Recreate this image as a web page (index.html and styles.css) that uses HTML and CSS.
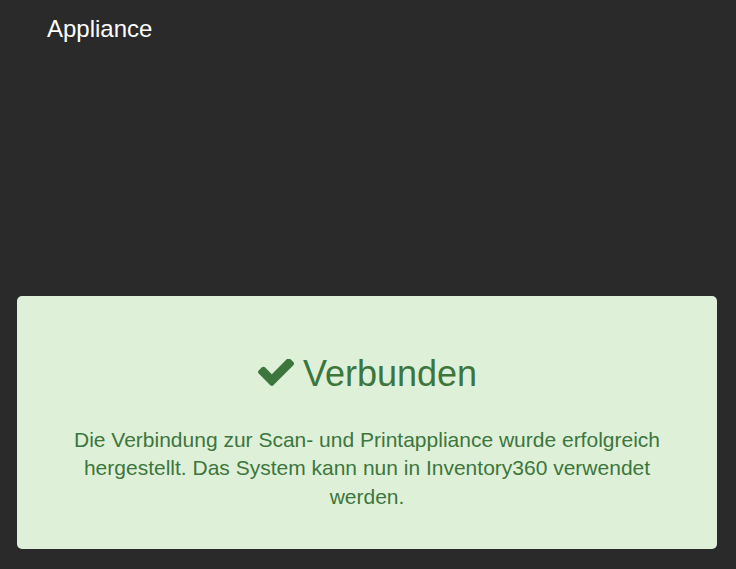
FILE: index.html
```html
<!DOCTYPE html>
<html lang="de">
<head>
<meta charset="utf-8">
<title>Appliance</title>
<link rel="stylesheet" href="styles.css">
</head>
<body>
<header class="topbar">
  <span class="brand">Appliance</span>
</header>
<main class="content">
  <section class="alert-success">
    <h1 class="status">
      <svg class="check" viewBox="120 370 1551 1156" aria-hidden="true"><path d="M1671 566q0 40-28 68l-724 724-136 136q-28 28-68 28t-68-28l-136-136-362-362q-28-28-28-68t28-68l136-136q28-28 68-28t68 28l294 295 656-657q28-28 68-28t68 28l136 136q28 28 28 68z" fill="currentColor"/></svg>
      <span>Verbunden</span>
    </h1>
    <p class="message">Die Verbindung zur Scan- und Printappliance wurde erfolgreich hergestellt. Das System kann nun in Inventory360 verwendet werden.</p>
  </section>
</main>
</body>
</html>
```

FILE: styles.css
```css
html, body {
  margin: 0;
  padding: 0;
  background: #2a2a2a;
  height: 100%;
}
body {
  font-family: "Liberation Sans", Arial, sans-serif;
}
.topbar {
  padding: 15px 47px 0;
  height: 296px;
  box-sizing: border-box;
}
.brand {
  color: #ffffff;
  font-size: 24px;
  line-height: 28px;
  display: block;
}
.content {
  padding: 0 17px;
}
.alert-success {
  width: 700px;
  box-sizing: border-box;
  background: #dff0d8;
  color: #3c763d;
  border-radius: 5px;
  padding: 58px 45px 38px;
  text-align: center;
}
.status {
  margin: 0;
  font-size: 36px;
  font-weight: normal;
  line-height: 1.1;
  display: flex;
  justify-content: center;
  align-items: center;
  gap: 9px;
}
.check {
  width: 36px;
  height: 27px;
  margin-top: -3px;
  margin-left: 1px;
}
.message {
  margin: 32px 0 0;
  font-size: 21px;
  line-height: 28.5px;
}
```
